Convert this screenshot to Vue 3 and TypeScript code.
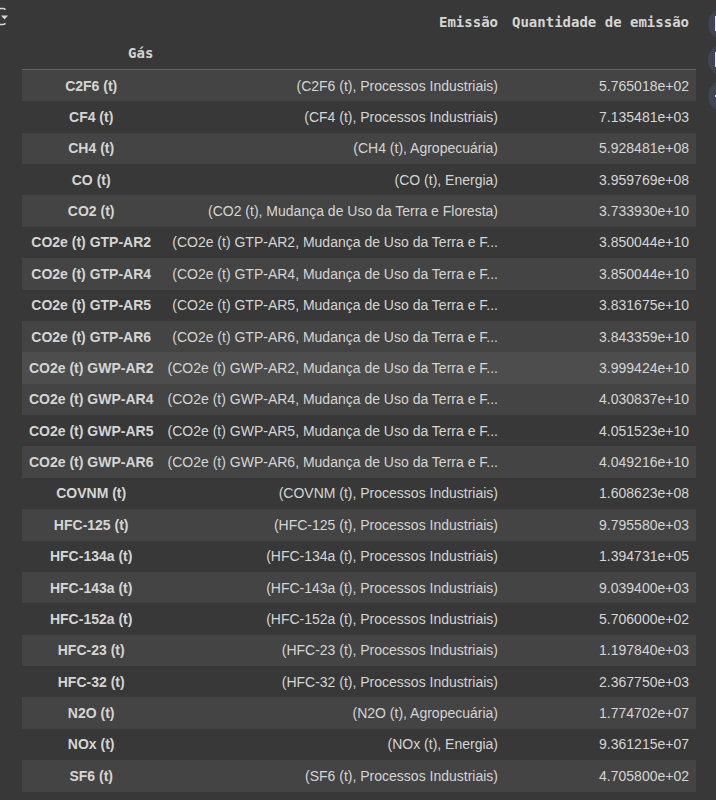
<script setup lang="ts">
interface Row { g: string; e: string; v: string }
const rows: Row[] = [
  { g: 'C2F6 (t)', e: '(C2F6 (t), Processos Industriais)', v: '5.765018e+02' },
  { g: 'CF4 (t)', e: '(CF4 (t), Processos Industriais)', v: '7.135481e+03' },
  { g: 'CH4 (t)', e: '(CH4 (t), Agropecuária)', v: '5.928481e+08' },
  { g: 'CO (t)', e: '(CO (t), Energia)', v: '3.959769e+08' },
  { g: 'CO2 (t)', e: '(CO2 (t), Mudança de Uso da Terra e Floresta)', v: '3.733930e+10' },
  { g: 'CO2e (t) GTP-AR2', e: '(CO2e (t) GTP-AR2, Mudança de Uso da Terra e F...', v: '3.850044e+10' },
  { g: 'CO2e (t) GTP-AR4', e: '(CO2e (t) GTP-AR4, Mudança de Uso da Terra e F...', v: '3.850044e+10' },
  { g: 'CO2e (t) GTP-AR5', e: '(CO2e (t) GTP-AR5, Mudança de Uso da Terra e F...', v: '3.831675e+10' },
  { g: 'CO2e (t) GTP-AR6', e: '(CO2e (t) GTP-AR6, Mudança de Uso da Terra e F...', v: '3.843359e+10' },
  { g: 'CO2e (t) GWP-AR2', e: '(CO2e (t) GWP-AR2, Mudança de Uso da Terra e F...', v: '3.999424e+10' },
  { g: 'CO2e (t) GWP-AR4', e: '(CO2e (t) GWP-AR4, Mudança de Uso da Terra e F...', v: '4.030837e+10' },
  { g: 'CO2e (t) GWP-AR5', e: '(CO2e (t) GWP-AR5, Mudança de Uso da Terra e F...', v: '4.051523e+10' },
  { g: 'CO2e (t) GWP-AR6', e: '(CO2e (t) GWP-AR6, Mudança de Uso da Terra e F...', v: '4.049216e+10' },
  { g: 'COVNM (t)', e: '(COVNM (t), Processos Industriais)', v: '1.608623e+08' },
  { g: 'HFC-125 (t)', e: '(HFC-125 (t), Processos Industriais)', v: '9.795580e+03' },
  { g: 'HFC-134a (t)', e: '(HFC-134a (t), Processos Industriais)', v: '1.394731e+05' },
  { g: 'HFC-143a (t)', e: '(HFC-143a (t), Processos Industriais)', v: '9.039400e+03' },
  { g: 'HFC-152a (t)', e: '(HFC-152a (t), Processos Industriais)', v: '5.706000e+02' },
  { g: 'HFC-23 (t)', e: '(HFC-23 (t), Processos Industriais)', v: '1.197840e+03' },
  { g: 'HFC-32 (t)', e: '(HFC-32 (t), Processos Industriais)', v: '2.367750e+03' },
  { g: 'N2O (t)', e: '(N2O (t), Agropecuária)', v: '1.774702e+07' },
  { g: 'NOx (t)', e: '(NOx (t), Energia)', v: '9.361215e+07' },
  { g: 'SF6 (t)', e: '(SF6 (t), Processos Industriais)', v: '4.705800e+02' },
]
</script>

<template>
  <div class="page">
    <svg class="run" width="10" height="20" viewBox="0 0 10 20" aria-hidden="true">
      <path d="M0 1.5H3.5Q5 1.5 5 3M0 17.5H3.5Q5 17.5 5 16" fill="none" stroke="#d5d5d5" stroke-width="1.6"/>
      <path d="M1 8.5h7l-3.5 4z" fill="#d5d5d5"/>
    </svg>
    <div class="side">
      <span class="disc"><i class="mark"></i></span>
      <span class="disc"><i class="mark"></i></span>
      <span class="disc"><i class="mark small"></i></span>
    </div>
    <table class="tbl">
      <thead>
        <tr class="h1">
          <th></th>
          <th>Emissão</th>
          <th>Quantidade de emissão</th>
        </tr>
        <tr class="h2">
          <th>Gás</th>
          <th></th>
          <th></th>
        </tr>
      </thead>
      <tbody>
        <tr v-for="(r, i) in rows" :key="r.g" :class="{ odd: i % 2 === 0, hover: r.g === 'CO2e (t) GWP-AR2' }">
          <th class="name">{{ r.g }}</th>
          <td>{{ r.e }}</td>
          <td>{{ r.v }}</td>
        </tr>
      </tbody>
    </table>
  </div>
</template>

<style>
html, body { margin: 0; background: #383838; overflow: hidden; }
</style>

<style scoped>
.page {
  position: relative;
  width: 716px;
  height: 800px;
  overflow: hidden;
  background: #383838;
  padding: 6px 0 0 22px;
  box-sizing: border-box;
}
.run { position: absolute; left: 0; top: 7px; }
.side {
  position: absolute;
  left: 708px;
  top: 8px;
  display: flex;
  flex-direction: column;
  gap: 4px;
}
.disc {
  width: 32px;
  height: 32px;
  border-radius: 50%;
  background: #3f4551;
  display: block;
  position: relative;
}
.mark {
  position: absolute;
  left: 7px;
  top: 8px;
  width: 6px;
  height: 15px;
  background: #e3e8f4;
}
.mark.small { top: 15px; height: 2px; }
.tbl {
  width: 674px;
  border-collapse: collapse;
  table-layout: fixed;
  font-family: "Liberation Sans", Arial, sans-serif;
  font-size: 14px;
  color: #d5d5d5;
}
.tbl th:nth-child(1) { width: 138.4px; }
.tbl th:nth-child(3) { width: 191px; }
thead th {
  font-family: "DejaVu Sans Mono", monospace;
  font-size: 14px;
  font-weight: 700;
  padding: 0 7px;
  box-sizing: border-box;
  text-align: right;
  vertical-align: middle;
  white-space: nowrap;
}
.h1 th { height: 32px; }
.h2 th { height: 31.9px; padding-bottom: 1.4px; border-bottom: 1px solid #666; }
tbody tr { height: 31.375px; }
tbody tr.odd { background: #444; }
tbody tr.hover { background: #4d4d4d; }
tbody th, tbody td {
  padding: 0 7px;
  white-space: nowrap;
  text-align: right;
  font-weight: 400;
  line-height: 16px;
}
tbody th.name { text-align: center; font-weight: 700; }
</style>
